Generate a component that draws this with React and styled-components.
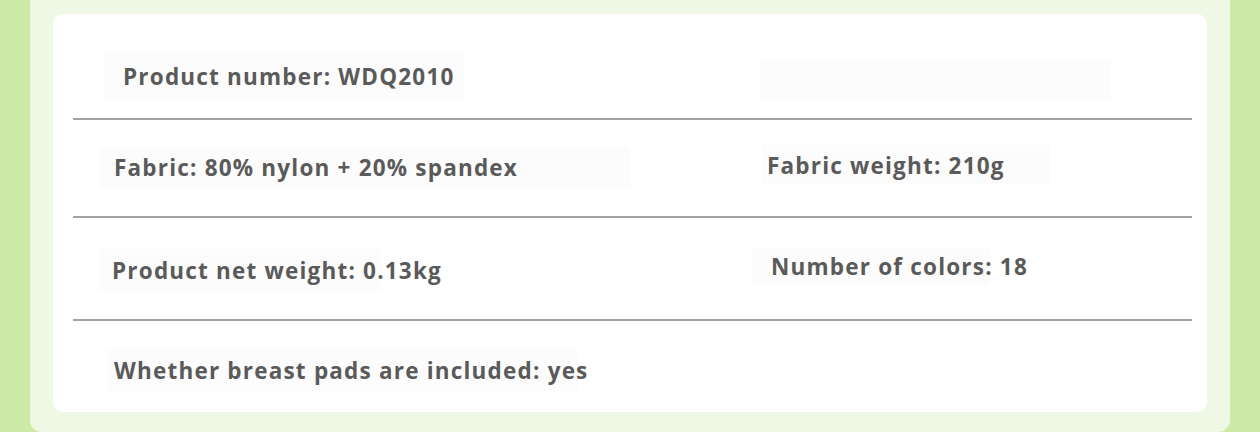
import React from 'react'
import styled, { createGlobalStyle } from 'styled-components'

const GlobalStyle = createGlobalStyle`
	html, body {
		margin: 0;
		padding: 0;
		background: #cdeaa8;
		font-family: 'Open Sans', 'Noto Sans', sans-serif;
	}
`

const Panel = styled.div`
	margin: 0 30px;
	height: 432px;
	box-sizing: border-box;
	padding: 14px 23px 20px 23px;
	background: #eef8e4;
	border-radius: 0 0 12px 12px;
`

const Card = styled.div`
	height: 398px;
	background: #ffffff;
	border-radius: 10px;
	display: grid;
	grid-template-rows: 106px 98px 103px 1fr;
	overflow: hidden;
`

const Row = styled.div`
	display: grid;
	grid-template-columns: 654px 1fr;
	margin: 0 15px 0 20px;
	border-bottom: ${(p) => (p.$last ? 'none' : '2px solid #a3a3a3')};
`

const Cell = styled.div`
	display: flex;
	align-items: flex-start;
	padding-top: ${(p) => p.$top}px;
	padding-left: ${(p) => p.$left}px;
`

const Label = styled.div`
	box-sizing: border-box;
	width: ${(p) => p.$w}px;
	height: ${(p) => p.$h}px;
	padding-left: ${(p) => p.$pad}px;
	display: flex;
	align-items: center;
	background: #fcfcfc;
	color: #5a5a5a;
	font-size: 22.5px;
	font-weight: 700;
	letter-spacing: 1.2px;
	white-space: nowrap;
`

const rows = [
	[
		{ text: 'Product number: WDQ2010', top: 39, left: 31, w: 360, h: 46, pad: 19 },
		{ text: '', top: 46, left: 33, w: 350, h: 40, pad: 0 },
	],
	[
		{ text: 'Fabric: 80% nylon + 20% spandex', top: 27, left: 27, w: 530, h: 41, pad: 14 },
		{ text: 'Fabric weight: 210g', top: 25, left: 35, w: 288, h: 40, pad: 5 },
	],
	[
		{ text: 'Product net weight: 0.13kg', top: 31, left: 27, w: 280, h: 42, pad: 12 },
		{ text: 'Number of colors: 18', top: 30, left: 25, w: 238, h: 37, pad: 19 },
	],
	[
		{ text: 'Whether breast pads are included: yes', top: 28, left: 35, w: 470, h: 42, pad: 6 },
	],
]

export default function App() {
	return (
		<>
			<GlobalStyle />
			<Panel>
				<Card>
					{rows.map((cells, i) => (
						<Row key={i} $last={i === rows.length - 1}>
							{cells.map((c, j) => (
								<Cell key={j} $top={c.top} $left={c.left}>
									<Label $w={c.w} $h={c.h} $pad={c.pad}>
										{c.text}
									</Label>
								</Cell>
							))}
						</Row>
					))}
				</Card>
			</Panel>
		</>
	)
}
